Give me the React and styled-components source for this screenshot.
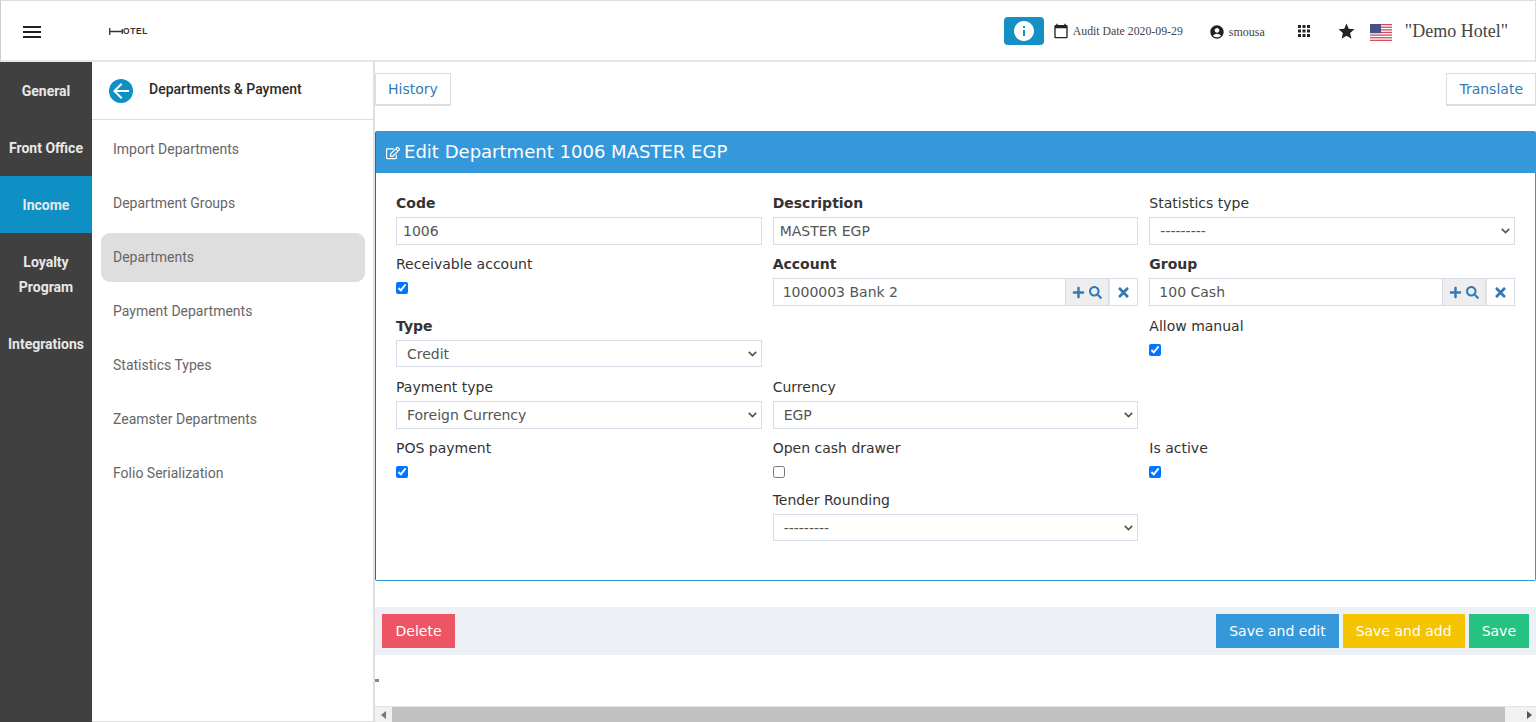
import React from 'react';
import styled, { createGlobalStyle } from 'styled-components';
import { MdMenu, MdInfo, MdCalendarToday, MdAccountCircle, MdApps, MdStar, MdArrowBack } from 'react-icons/md';
import { FaPlus, FaSearch, FaTimes, FaRegEdit } from 'react-icons/fa';

const GlobalStyle = createGlobalStyle`
  html, body { margin: 0; padding: 0; height: 100%; overflow: hidden; background: #fff; }
  * { box-sizing: border-box; }
`;

const chevron = "url(\"data:image/svg+xml,%3Csvg xmlns='http://www.w3.org/2000/svg' width='9' height='6' viewBox='0 0 9 6'%3E%3Cpath d='M0.8 0.8L4.5 4.5L8.2 0.8' fill='none' stroke='%23555' stroke-width='1.7'/%3E%3C/svg%3E\")";

const Page = styled.div`
  width: 1536px;
  height: 722px;
  display: flex;
  flex-direction: column;
  font-family: "DejaVu Sans", sans-serif;
  font-size: 14px;
  color: #333;
  overflow: hidden;
`;

const TopBar = styled.header`
  height: 62px;
  flex: none;
  display: flex;
  align-items: center;
  padding: 1px 27px 0 19px;
  border: 1px solid #ddd;
  border-bottom: 2px solid #e6e6e6;
  border-left: 1px solid #ccc;
  font-family: "Liberation Serif", serif;
`;

const MenuButton = styled.div`
  display: flex;
  padding-top: 2px;
  color: #222;
  font-size: 24px;
`;

const Logo = styled.div`
  margin-left: 65px;
  display: flex;
  align-items: center;
  font-family: "Liberation Sans", sans-serif;
  font-weight: 700;
  font-size: 8.5px;
  letter-spacing: 0.6px;
  color: #333;
`;

const TopRight = styled.div`
  margin-left: auto;
  display: flex;
  align-items: center;
`;

const InfoButton = styled.div`
  width: 40px;
  height: 28px;
  border-radius: 4px;
  background: #1490c4;
  color: #fff;
  display: flex;
  align-items: center;
  justify-content: center;
  font-size: 24px;
`;

const TopItem = styled.div`
  display: flex;
  align-items: center;
  margin-left: ${p => p.$gap}px;
  padding-top: ${p => p.$drop || 0}px;
  font-size: ${p => p.$size || 12}px;
  color: #444;
  gap: ${p => p.$inner || 0}px;
  white-space: nowrap;
  svg { color: #222; flex: none; }
`;

const Body = styled.div`
  flex: 1;
  min-height: 0;
  display: flex;
`;

const Rail = styled.nav`
  width: 92px;
  flex: none;
  background: #404040;
`;

const RailItem = styled.div`
  padding: 17px 4px 15px;
  line-height: 25px;
  text-align: center;
  font-family: Roboto, sans-serif;
  font-weight: 700;
  font-size: 14px;
  color: #e8e8e8;
  background: ${p => (p.$active ? '#0e90c4' : 'transparent')};
`;

const SideMenu = styled.aside`
  width: 283px;
  flex: none;
  border-right: 2px solid #e0e0e0;
  border-bottom: 1px solid #ddd;
  font-family: Roboto, sans-serif;
`;

const SideHead = styled.div`
  height: 58px;
  display: flex;
  align-items: center;
  gap: 16px;
  padding: 0 0 3px 17px;
  border-bottom: 1px solid #ddd;
  font-weight: 500;
  font-size: 14px;
  color: #2b2b2b;
`;

const BackCircle = styled.div`
  width: 24px;
  height: 24px;
  border-radius: 50%;
  background: #0e90c4;
  color: #fff;
  display: flex;
  align-items: center;
  justify-content: center;
  font-size: 24px;
  position: relative;
  top: 2px;
`;

const SideList = styled.div`
  display: flex;
  flex-direction: column;
  gap: 5px;
  padding: 5px 8px 0 9px;
`;

const SideItem = styled.div`
  height: 49px;
  display: flex;
  align-items: center;
  padding: 0 0 2px 12px;
  border-radius: 9px;
  font-size: 14px;
  color: #666;
  background: ${p => (p.$active ? '#dedede' : 'transparent')};
`;

const Main = styled.main`
  flex: 1;
  min-width: 0;
  display: flex;
  flex-direction: column;
`;

const ActionRow = styled.div`
  display: flex;
  justify-content: space-between;
  padding-top: 11px;
  margin-bottom: 25px;
`;

const LinkButton = styled.div`
  height: 33px;
  display: flex;
  align-items: center;
  padding: 0 12px;
  border: 1px solid #ddd;
  border-bottom-width: 2px;
  font-size: 14px;
  color: #337ab7;
`;

const Card = styled.section`
  border: 1px solid #3498db;
  border-left-color: #2f6f9f;
  border-radius: 2px;
`;

const CardTitle = styled.h2`
  margin: 0;
  height: 41px;
  display: flex;
  align-items: center;
  gap: 4px;
  padding: 0 0 2px 10px;
  background: #3498db;
  color: #fff;
  font-weight: 400;
  font-size: 18.05px;
  svg { font-size: 14px; margin-top: 3px; }
`;

const FormGrid = styled.div`
  display: grid;
  grid-template-columns: repeat(3, 1fr);
  column-gap: 11px;
  row-gap: 9.6px;
  padding: 20px 20px 39px;
`;

const Field = styled.div`
  min-width: 0;
  ${p => p.$col && `grid-column: ${p.$col};`}
`;

const Label = styled.div`
  line-height: 21px;
  margin-bottom: 3.2px;
  font-size: 14px;
  font-weight: ${p => (p.$bold ? 700 : 400)};
  color: #333;
`;

const TextInput = styled.input`
  display: block;
  width: 100%;
  height: 27.5px;
  padding: 0 6px;
  border: 1px solid #d8dbe8;
  border-radius: 0;
  outline: none;
  font: inherit;
  color: #555;
  background: #fff;
`;

const Select = styled.select`
  display: block;
  width: 100%;
  height: 27.5px;
  padding: 0 20px 0 10px;
  border: 1px solid #d8dbe8;
  border-radius: 0;
  outline: none;
  font: inherit;
  color: #555;
  appearance: none;
  background: #fff ${chevron} no-repeat right 4px center;
`;

const CheckBox = styled.input.attrs({ type: 'checkbox' })`
  display: block;
  width: 12px;
  height: 12px;
  margin: 7px 0 2px;
`;

const LookupGroup = styled.div`
  display: flex;
  height: 27.5px;
  ${TextInput} { flex: 1; min-width: 0; padding: 0 9px; }
`;

const LookupAddon = styled.div`
  flex: none;
  width: ${p => p.$width}px;
  display: flex;
  align-items: center;
  justify-content: center;
  gap: 4px;
  border: 1px solid #d8dbe8;
  border-left: ${p => (p.$first ? 'none' : '1px solid #e6e6e6')};
  background: ${p => (p.$first ? '#eee' : '#fff')};
  color: #337ab7;
  font-size: 13px;
`;

const FooterBar = styled.div`
  margin-top: 25.5px;
  height: 48px;
  display: flex;
  align-items: center;
  gap: 4px;
  padding: 0 7px;
  background: #edf0f5;
`;

const Spacer = styled.div`
  margin-right: auto;
`;

const ActionButton = styled.div`
  height: 34px;
  display: flex;
  align-items: center;
  padding: 0 ${p => p.$pad || 13}px;
  color: #fff;
  font-size: 14px;
  background: ${p => p.$color};
`;

const BottomArea = styled.div`
  flex: 1;
  display: flex;
  align-items: center;
`;

const ResizeMark = styled.div`
  width: 4px;
  height: 3px;
  background: #888;
`;

const ScrollBar = styled.div`
  height: 16px;
  flex: none;
  display: flex;
  align-items: stretch;
  background: #f1f1f1;
  border-top: 1px solid #e4e4e4;
`;

const ScrollArrow = styled.div`
  width: ${p => p.$width}px;
  display: flex;
  align-items: center;
  justify-content: ${p => (p.$right ? 'flex-end' : 'center')};
  padding-right: ${p => (p.$right ? 4 : 0)}px;
  flex: none;
  svg { display: block; }
`;

const ScrollThumb = styled.div`
  flex: 1;
  background: #c1c1c1;
`;

const railItems = ['General', 'Front Office', 'Income', 'Loyalty Program', 'Integrations'];
const sideItems = [
  'Import Departments',
  'Department Groups',
  'Departments',
  'Payment Departments',
  'Statistics Types',
  'Zeamster Departments',
  'Folio Serialization',
];

const LogoMark = () => (
  <svg width="14" height="7" viewBox="0 0 14 7">
    <path d="M0.7 0v7M0.7 3.5h13M13.3 1v5" stroke="#333" strokeWidth="1.3" fill="none" />
  </svg>
);

const UsFlag = () => {
  const stripes = [0, 2, 4, 6, 8, 10, 12];
  return (
    <svg width="22" height="17" viewBox="0 0 22 13" preserveAspectRatio="none">
      <rect width="22" height="13" fill="#fff" />
      {stripes.map(y => (
        <rect key={y} y={y} width="22" height="1" fill="#d0505c" />
      ))}
      <rect width="11" height="7" fill="#4a4f86" />
    </svg>
  );
};

const Lookup = ({ value }) => (
  <LookupGroup>
    <TextInput defaultValue={value} readOnly />
    <LookupAddon $first $width={43}>
      <FaPlus size={13} />
      <FaSearch size={13} />
    </LookupAddon>
    <LookupAddon $width={29}>
      <FaTimes size={15} />
    </LookupAddon>
  </LookupGroup>
);

const Dropdown = ({ value }) => (
  <Select defaultValue={value}>
    <option>{value}</option>
  </Select>
);

export default function App() {
  return (
    <Page>
      <GlobalStyle />
      <TopBar>
        <MenuButton><MdMenu /></MenuButton>
        <Logo><LogoMark />OTEL</Logo>
        <TopRight>
          <InfoButton><MdInfo /></InfoButton>
          <TopItem $gap={9} $inner={4} $size={11.8}>
            <MdCalendarToday size={16} />
            Audit Date 2020-09-29
          </TopItem>
          <TopItem $gap={26} $inner={4} $size={12} $drop={2}>
            <MdAccountCircle size={16} />
            smousa
          </TopItem>
          <TopItem $gap={30}><MdApps size={18} /></TopItem>
          <TopItem $gap={24} $drop={1}><MdStar size={19} /></TopItem>
          <TopItem $gap={14} $drop={2}><UsFlag /></TopItem>
          <TopItem $gap={13} $size={18}>"Demo Hotel"</TopItem>
        </TopRight>
      </TopBar>
      <Body>
        <Rail>
          {railItems.map(name => (
            <RailItem key={name} $active={name === 'Income'}>{name}</RailItem>
          ))}
        </Rail>
        <SideMenu>
          <SideHead>
            <BackCircle><MdArrowBack /></BackCircle>
            Departments &amp; Payment
          </SideHead>
          <SideList>
            {sideItems.map(name => (
              <SideItem key={name} $active={name === 'Departments'}>{name}</SideItem>
            ))}
          </SideList>
        </SideMenu>
        <Main>
          <ActionRow>
            <LinkButton>History</LinkButton>
            <LinkButton>Translate</LinkButton>
          </ActionRow>
          <Card>
            <CardTitle><FaRegEdit />Edit Department 1006 MASTER EGP</CardTitle>
            <FormGrid>
              <Field>
                <Label $bold>Code</Label>
                <TextInput defaultValue="1006" />
              </Field>
              <Field>
                <Label $bold>Description</Label>
                <TextInput defaultValue="MASTER EGP" />
              </Field>
              <Field>
                <Label>Statistics type</Label>
                <Dropdown value="---------" />
              </Field>

              <Field>
                <Label>Receivable account</Label>
                <CheckBox defaultChecked />
              </Field>
              <Field>
                <Label $bold>Account</Label>
                <Lookup value="1000003 Bank 2" />
              </Field>
              <Field>
                <Label $bold>Group</Label>
                <Lookup value="100 Cash" />
              </Field>

              <Field>
                <Label $bold>Type</Label>
                <Dropdown value="Credit" />
              </Field>
              <Field $col={3}>
                <Label>Allow manual</Label>
                <CheckBox defaultChecked />
              </Field>

              <Field>
                <Label>Payment type</Label>
                <Dropdown value="Foreign Currency" />
              </Field>
              <Field $col={2}>
                <Label>Currency</Label>
                <Dropdown value="EGP" />
              </Field>

              <Field $col={1}>
                <Label>POS payment</Label>
                <CheckBox defaultChecked />
              </Field>
              <Field>
                <Label>Open cash drawer</Label>
                <CheckBox />
              </Field>
              <Field>
                <Label>Is active</Label>
                <CheckBox defaultChecked />
              </Field>

              <Field $col={2}>
                <Label>Tender Rounding</Label>
                <Dropdown value="---------" />
              </Field>
            </FormGrid>
          </Card>
          <FooterBar>
            <ActionButton $color="#ed5565" $pad={13.5}>Delete</ActionButton>
            <Spacer />
            <ActionButton $color="#3498db">Save and edit</ActionButton>
            <ActionButton $color="#f5c400">Save and add</ActionButton>
            <ActionButton $color="#26c281">Save</ActionButton>
          </FooterBar>
          <BottomArea><ResizeMark /></BottomArea>
          <ScrollBar>
            <ScrollArrow $width={17}>
              <svg width="5" height="8" viewBox="0 0 5 8"><path d="M5 0v8L0 4z" fill="#777" /></svg>
            </ScrollArrow>
            <ScrollThumb />
            <ScrollArrow $width={31} $right>
              <svg width="5" height="8" viewBox="0 0 5 8"><path d="M0 0v8l5-4z" fill="#555" /></svg>
            </ScrollArrow>
          </ScrollBar>
        </Main>
      </Body>
    </Page>
  );
}
